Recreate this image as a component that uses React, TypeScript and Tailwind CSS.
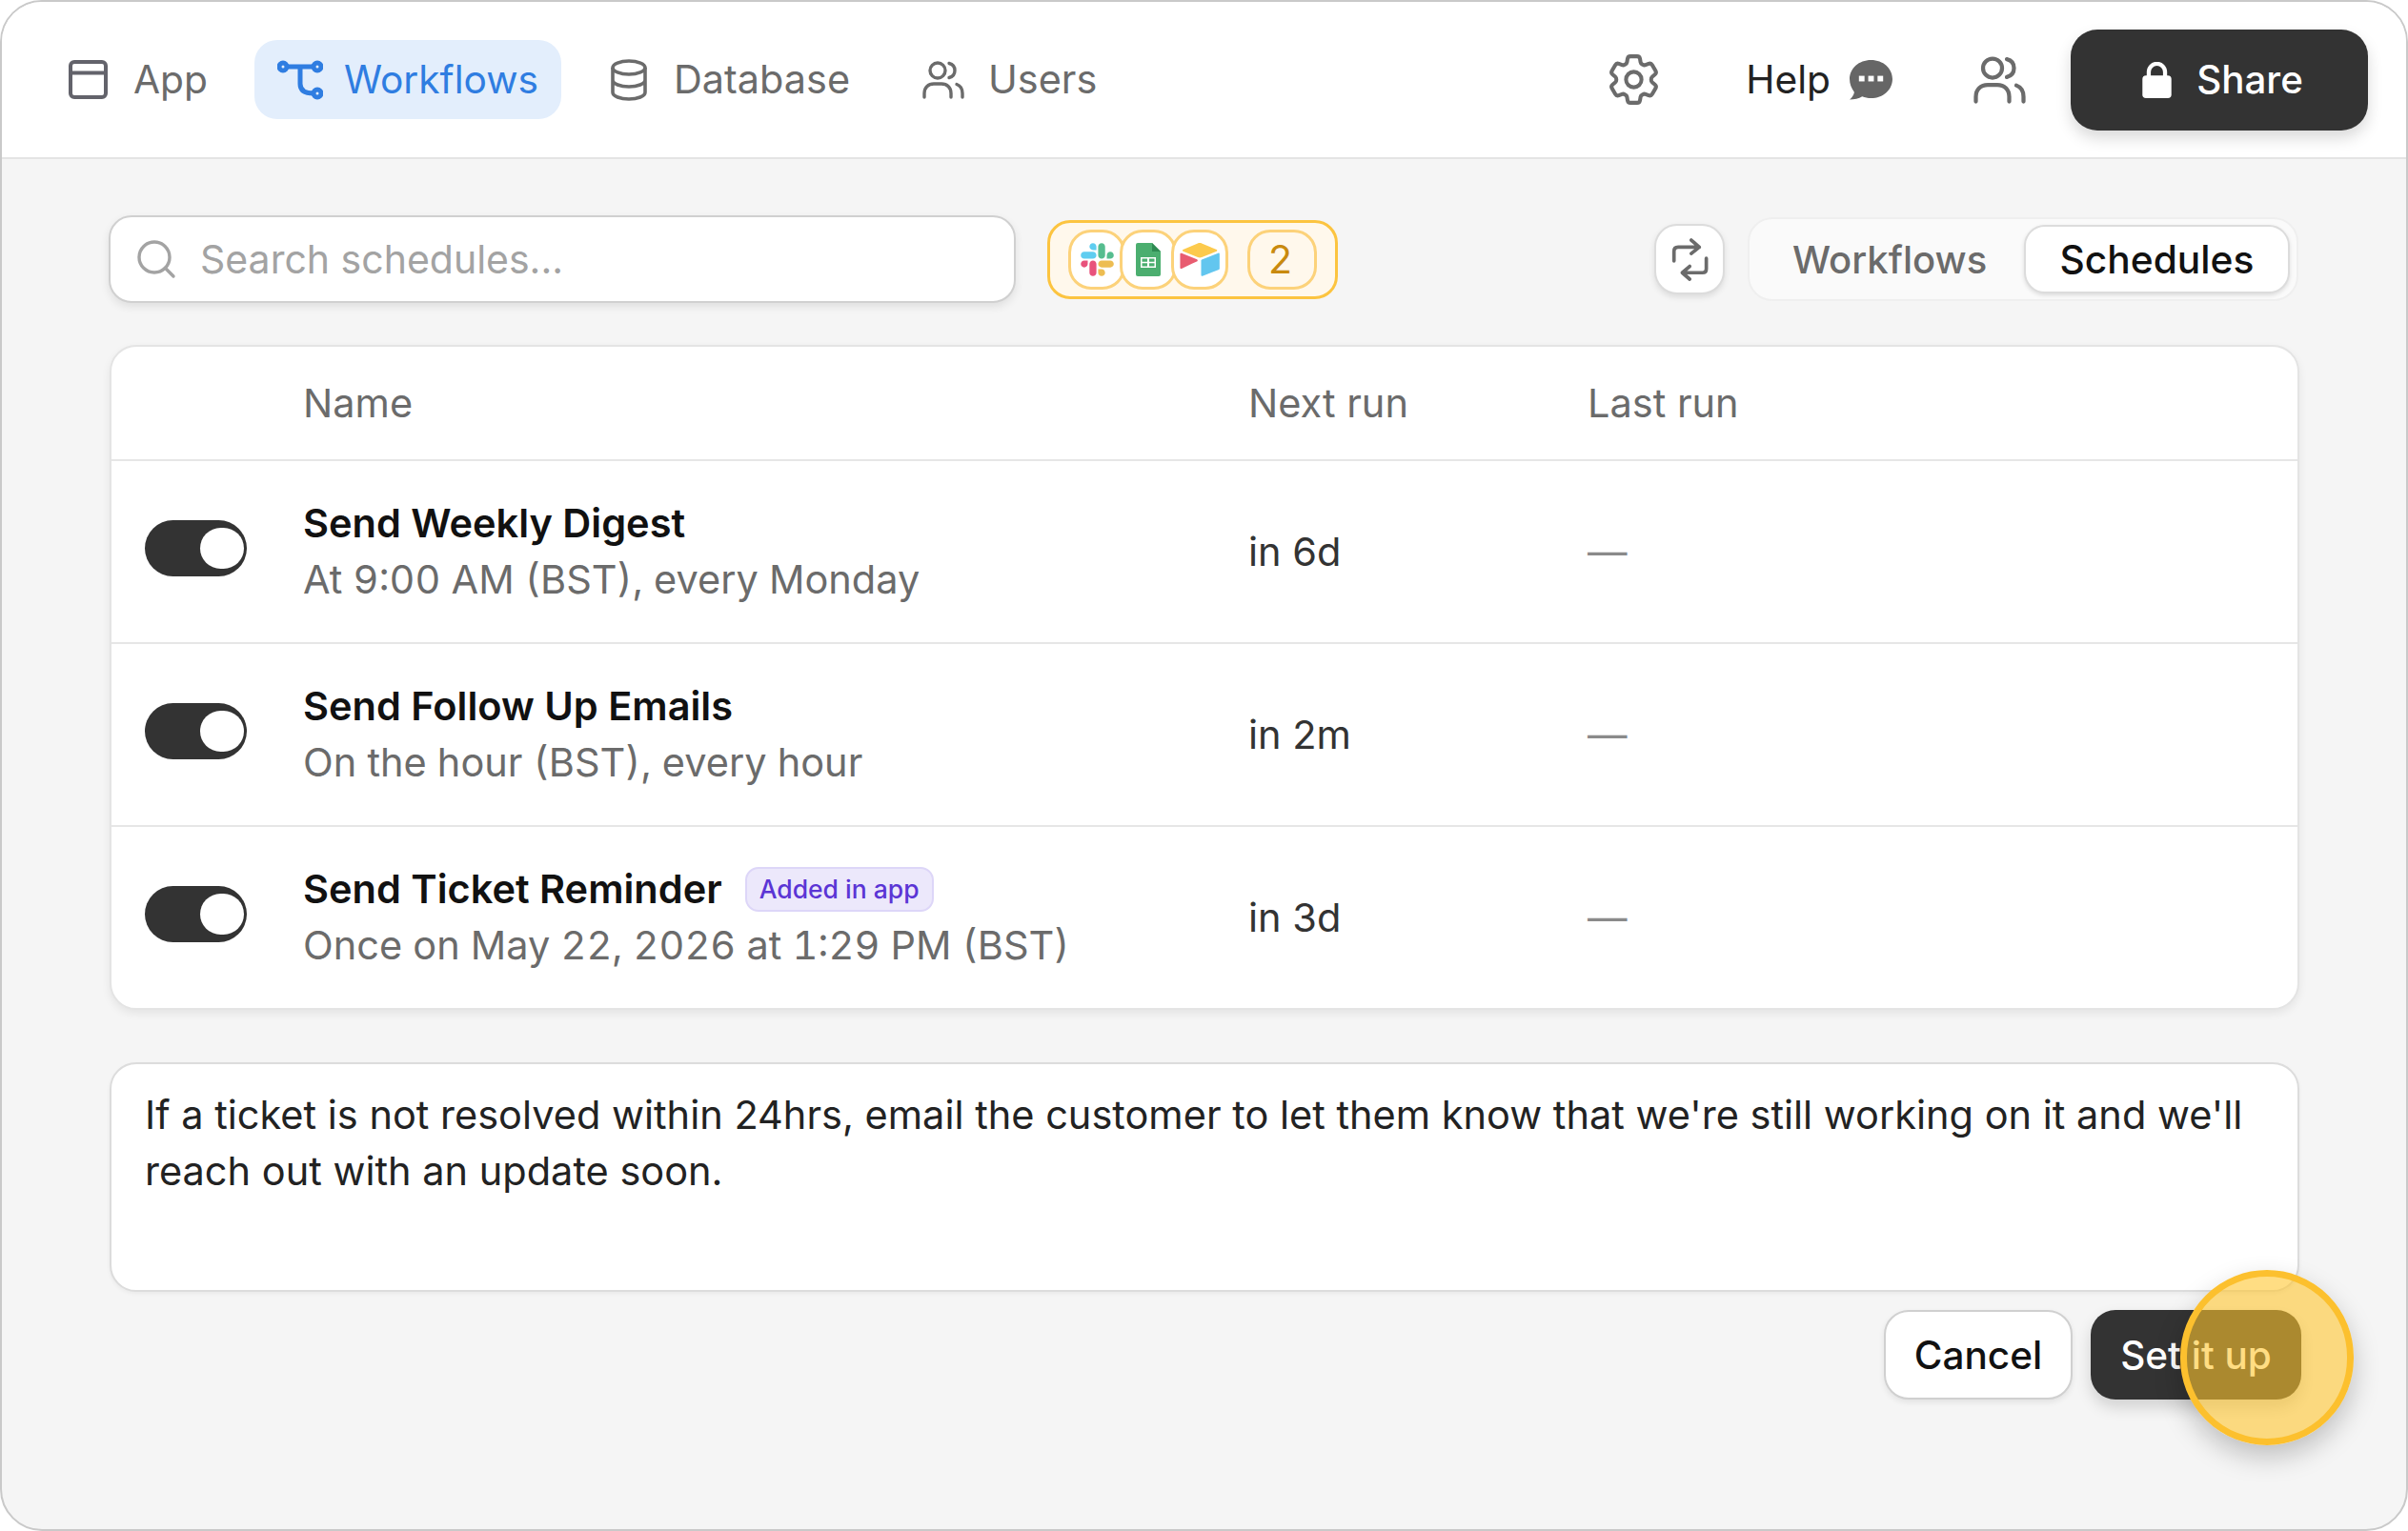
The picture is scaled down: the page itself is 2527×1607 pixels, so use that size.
import { Search } from "lucide-react";
import { HiOutlineCog6Tooth } from "react-icons/hi2";

type Schedule = {
  name: string;
  when: string;
  next: string;
  badge?: string;
};

const schedules: Schedule[] = [
  { name: "Send Weekly Digest", when: "At 9:00 AM (BST), every Monday", next: "in 6d" },
  { name: "Send Follow Up Emails", when: "On the hour (BST), every hour", next: "in 2m" },
  {
    name: "Send Ticket Reminder",
    when: "Once on May 22, 2026 at 1:29 PM (BST)",
    next: "in 3d",
    badge: "Added in app",
  },
];

const AppIcon = () => (
  <svg viewBox="0 0 41 41" className="h-[41px] w-[41px]" fill="none" stroke="currentColor" strokeWidth="4">
    <rect x="2" y="2" width="37" height="37" rx="4" />
    <path d="M2 13.5h37" />
  </svg>
);

const FlowIcon = () => (
  <svg viewBox="0 0 48 42" className="h-[42px] w-[48px]" fill="none" stroke="currentColor" strokeWidth="5">
    <circle cx="6" cy="7" r="4" />
    <circle cx="42" cy="7" r="4" />
    <circle cx="42" cy="35" r="4" />
    <path d="M10 7h28M24 7v18c0 6 4 10 14 10" />
  </svg>
);

const DbIcon = () => (
  <svg viewBox="0 0 40 44" className="h-[44px] w-[40px]" fill="none" stroke="currentColor" strokeWidth="3.6">
    <ellipse cx="20" cy="9" rx="17" ry="7" />
    <path d="M3 9v26c0 4 8 7 17 7s17-3 17-7V9M3 22c0 4 8 7 17 7s17-3 17-7" />
  </svg>
);

const UsersIcon = ({ className }: { className: string }) => (
  <svg viewBox="0 0 44 40" className={className} fill="none" stroke="currentColor" strokeWidth="3.4" strokeLinecap="round">
    <circle cx="16" cy="10" r="8" />
    <path d="M28 2.500c4 1 6 4 6 7.500s-2 6.500-6 7.500M2 38v-4c0-6 4-10 10-10h8c6 0 10 4 10 10v4M36 24.500c4 1.500 6 5 6 9.500v4" />
  </svg>
);

const ChatIcon = () => (
  <svg viewBox="0 0 48 44" className="h-[43px] w-[47px]">
    <path d="M24 1c13 0 23 9 23 20.500S37 42 24 42c-3.500 0-6.500-.6-9.500-1.800C11 42.500 6 43.500 1 43.500c2.500-2 4.500-5 5-8C3 31.500 1 26.800 1 21.500 1 10 11 1 24 1z" fill="#666666" />
    <rect x="11" y="18" width="6" height="6" fill="#fff" />
    <rect x="21" y="18" width="6" height="6" fill="#fff" />
    <rect x="31" y="18" width="6" height="6" fill="#fff" />
  </svg>
);

const LockIcon = () => (
  <svg viewBox="0 0 34 40" className="h-[38px] w-[33px]">
    <path d="M8 17v-6a9 9 0 0 1 18 0v6" fill="none" stroke="#fff" strokeWidth="4.500" />
    <rect x="1" y="15" width="32" height="25" rx="4" fill="#fff" />
  </svg>
);

const RepeatIcon = () => (
  <svg viewBox="98 84 116 134" className="h-[45px] w-[39px]" fill="none" stroke="#6b6b6b" strokeWidth="11" strokeLinecap="round" strokeLinejoin="round">
    <path d="M106 155v-30q0-13 13-13h66M160 90l25 22-25 20M207 147v33q0 12-12 12h-62M155 172l-23 20 23 20" />
  </svg>
);

const SlackLogo = () => (
  <svg viewBox="0 0 127 127" className="h-[35px] w-[35px]">
    <path d="M27.2 80c0 7.300-5.900 13.200-13.200 13.200C6.700 93.200.8 87.300.8 80c0-7.300 5.900-13.200 13.200-13.200h13.200V80zm6.600 0c0-7.300 5.900-13.200 13.200-13.200 7.300 0 13.200 5.900 13.200 13.200v33c0 7.300-5.900 13.200-13.200 13.200-7.300 0-13.200-5.900-13.200-13.200V80z" fill="#e8527c" />
    <path d="M47 27c-7.300 0-13.200-5.900-13.200-13.200C33.800 6.500 39.700.6 47 .6c7.300 0 13.200 5.900 13.200 13.200V27H47zm0 6.700c7.300 0 13.200 5.900 13.200 13.200 0 7.300-5.900 13.200-13.200 13.200H13.900C6.600 60.100.7 54.200.7 46.900c0-7.300 5.900-13.200 13.200-13.200H47z" fill="#5fcdf0" />
    <path d="M99.900 46.900c0-7.300 5.900-13.200 13.200-13.200 7.300 0 13.200 5.900 13.200 13.200 0 7.300-5.900 13.200-13.200 13.200H99.900V46.900zm-6.600 0c0 7.300-5.900 13.200-13.200 13.200-7.300 0-13.200-5.900-13.200-13.200V13.800C66.900 6.500 72.800.6 80.100.6c7.300 0 13.200 5.900 13.200 13.200v33.100z" fill="#56bd8f" />
    <path d="M80.100 99.800c7.300 0 13.200 5.900 13.200 13.200 0 7.300-5.900 13.200-13.200 13.200-7.300 0-13.200-5.900-13.200-13.200V99.800h13.200zm0-6.600c-7.300 0-13.200-5.900-13.200-13.200 0-7.300 5.900-13.200 13.200-13.200h33.100c7.300 0 13.200 5.900 13.200 13.200 0 7.300-5.900 13.200-13.200 13.200H80.100z" fill="#edbd52" />
  </svg>
);

const SheetsLogo = () => (
  <svg viewBox="0 0 26 35" className="h-[35px] w-[26px]">
    <path d="M2 0h15l9 9v24a2 2 0 0 1-2 2H2a2 2 0 0 1-2-2V2a2 2 0 0 1 2-2z" fill="#4bae6f" />
    <path d="M17 0l9 9h-9z" fill="#2f8a52" />
    <path d="M5 15h16v11H5z" fill="#fff" />
    <path d="M6.500 16.500h5.500v3.200H6.500zM14 16.500h5.500v3.200H14zM6.500 21.300h5.500v3.200H6.500zM14 21.300h5.500v3.200H14z" fill="#4bae6f" />
  </svg>
);

const AirtableLogo = () => (
  <svg viewBox="0 0 200 172" className="h-[36px] w-[42px]">
    <path d="M90 7.300 16.300 37.800c-4.100 1.700-4 7.500.1 9.200l74 29.300c6.500 2.600 13.700 2.600 20.200 0l74-29.300c4.100-1.600 4.200-7.500.1-9.200L110.100 7.300c-6.400-2.700-13.600-2.700-20.100 0" fill="#fcca4d" />
    <path d="M107.100 92.400v73.300c0 3.500 3.500 5.900 6.800 4.600l82.500-32c1.900-.8 3.100-2.600 3.100-4.600V60.400c0-3.500-3.500-5.900-6.800-4.600l-82.500 32c-1.900.7-3.100 2.600-3.100 4.600" fill="#62c6ef" />
    <path d="M88 96.200 63.500 108l-2.500 1.200-51.700 24.800c-3.300 1.600-7.500-.8-7.500-4.500V60.700c0-1.300.7-2.500 1.600-3.400.4-.4.8-.7 1.200-.9 1.200-.7 3-.9 4.400-.3L86.400 87c4 1.600 4.300 7.200 1.600 9.200" fill="#e85c70" />
  </svg>
);

const Toggle = () => (
  <div className="mb-[7px] flex h-[59px] w-[107px] items-center justify-end rounded-full bg-[#333333] pr-[3px]">
    <div className="h-[43px] w-[46px] rounded-full bg-white" />
  </div>
);

const Logo = ({ children }: { children: React.ReactNode }) => (
  <div className="-ml-[6px] flex h-[63px] w-[60px] items-center justify-center rounded-[24px] border-[3px] border-[#fcd27a] bg-white first:ml-0">
    {children}
  </div>
);

export default function App() {
  return (
    <div className="relative h-[1607px] w-[2527px] bg-white font-[family-name:Inter,sans-serif] text-[41.5px] leading-[59px]">
      <div className="flex h-full flex-col overflow-hidden rounded-[44px] border-2 border-[#c9c9c9] bg-[#f5f5f5]">
        {/* Top bar */}
        <div className="flex h-[165px] shrink-0 items-center justify-between border-b-2 border-[#e4e4e4] bg-white pl-[46px] pr-[40px] text-[41.4px]">
          <div className="flex items-center">
            <div className="flex h-[83px] items-center gap-[27px] px-[24px] text-[#6b6b6b]">
              <span className="text-[#63636b]"><AppIcon /></span>
              <span className="text-[40.7px]">App</span>
            </div>
            <div className="ml-[25px] flex h-[83px] items-center gap-[22px] rounded-[24px] bg-[#e3eefc] px-[24px] text-[40.7px] text-[#2f7de1]">
              <FlowIcon />
              <span>Workflows</span>
            </div>
            <div className="ml-[27px] flex h-[83px] items-center gap-[27px] px-[24px] text-[#6b6b6b]">
              <DbIcon />
              <span>Database</span>
            </div>
            <div className="ml-[28px] flex h-[83px] items-center gap-[25px] px-[24px] text-[#6b6b6b]">
              <UsersIcon className="h-[40px] w-[44px]" />
              <span>Users</span>
            </div>
          </div>
          <div className="flex items-center">
            <HiOutlineCog6Tooth className="h-[65px] w-[65px] text-[#6b6b6b]" />
            <div className="ml-[85px] flex items-center gap-[19px] text-[40.7px] text-[#222222]">
              <span>Help</span>
              <ChatIcon />
            </div>
            <span className="ml-[84px] text-[#6b6b6b]"><UsersIcon className="h-[50px] w-[55px]" /></span>
            <button className="ml-[47px] flex h-[106px] w-[312px] items-center justify-center gap-[25px] rounded-[28px] bg-[#333333] pl-[6px] text-[40.3px] font-medium text-white shadow-[0_8px_16px_rgba(0,0,0,0.15)]">
              <LockIcon />
              Share
            </button>
          </div>
        </div>

        <div className="flex flex-1 flex-col pl-[112px] pr-[112px] pt-[59px]">
          {/* Toolbar */}
          <div className="flex h-[92px] items-center">
            <div className="flex h-[92px] w-[952px] items-center gap-[22px] rounded-[24px] border-2 border-[#d0d0d0] bg-white pl-[24px] text-[41px] text-[#a3a3a3] shadow-[0_4px_10px_rgba(0,0,0,0.09)]">
              <Search className="h-[48px] w-[48px]" strokeWidth={1.7} />
              <span>Search schedules...</span>
            </div>
            <div className="ml-[33px] flex h-[83px] w-[305px] items-center rounded-[24px] border-[3px] border-[#fcc440] bg-[#fff8ec] pl-[19px]">
              <Logo><SlackLogo /></Logo>
              <Logo><SheetsLogo /></Logo>
              <Logo><AirtableLogo /></Logo>
              <div className="ml-[20px] flex h-[63px] w-[73px] items-center justify-center rounded-[24px] border-[3px] border-[#fcd27a] pr-[4px] text-[41px] text-[#c98a0e]">
                2
              </div>
            </div>
            <div className="ml-auto flex h-[74px] w-[74px] items-center justify-center rounded-[24px] border-2 border-[#dcdcdc] bg-white shadow-[0_3px_6px_rgba(0,0,0,0.1)]">
              <RepeatIcon />
            </div>
            <div className="ml-[24px] mr-[1px] flex h-[88px] w-[578px] items-center justify-between rounded-[26px] border-2 border-[#efefef] bg-[#fafafa] pl-[45px] pr-[7px] text-[40px]">
              <span className="font-medium text-[#6b6b6b]">Workflows</span>
              <div className="flex h-[72px] w-[279px] items-center justify-center rounded-[22px] border-2 border-[#dcdcdc] bg-white text-[40.7px] font-medium text-[#111111] shadow-[0_2px_4px_rgba(0,0,0,0.12)]">
                Schedules
              </div>
            </div>
          </div>

          {/* Table */}
          <div className="ml-[1px] mt-[44px] rounded-[28px] border-2 border-[#e4e4e4] bg-white shadow-[0_4px_10px_rgba(0,0,0,0.07)]">
            <div className="grid h-[120px] grid-cols-[201px_992px_356px_1fr] items-center border-b-2 border-[#e6e6e6] text-[#6b6b6b]">
              <div />
              <div>Name</div>
              <div>Next run</div>
              <div>Last run</div>
            </div>
            {schedules.map((item, index) => (
              <div
                key={item.name}
                className={`grid grid-cols-[201px_992px_356px_1fr] items-center ${
                  index < schedules.length - 1 ? "h-[192px] border-b-2 border-[#e6e6e6]" : "h-[190px]"
                }`}
              >
                <div className="pl-[35px]">
                  <Toggle />
                </div>
                <div>
                  <div className="flex items-center gap-[24px] font-semibold text-[#111111]">
                    {item.name}
                    {item.badge && (
                      <span className="rounded-[14px] border-2 border-[#ddd6f8] bg-[#ece8fb] px-[13px] py-[2px] text-[26.5px] font-medium leading-[39px] text-[#5b35d5]">
                        {item.badge}
                      </span>
                    )}
                  </div>
                  <div className="text-[#6b6b6b] tabular-nums">{item.when}</div>
                </div>
                <div className="text-[#333333]">{item.next}</div>
                <div className="text-[#8a8a8a]">—</div>
              </div>
            ))}
          </div>

          {/* Prompt */}
          <div className="ml-[1px] mt-[55px] h-[241px] rounded-[28px] border-2 border-[#dcdcdc] bg-white px-[35px] pt-[24px] text-[#222222] shadow-[0_2px_4px_rgba(0,0,0,0.05)]">
            If a ticket is not resolved within 24hrs, email the customer to let them know that we're still working on it and we'll reach out with an update soon.
          </div>

          <div className="-mr-[2px] mt-[19px] flex justify-end gap-[19px]">
            <button className="h-[94px] w-[198px] rounded-[26px] border-2 border-[#d0d0d0] bg-white text-[40.5px] font-medium text-[#111111] shadow-[0_3px_6px_rgba(0,0,0,0.08)]">
              Cancel
            </button>
            <button className="h-[94px] w-[221px] rounded-[26px] bg-[#333333] text-[40.5px] font-medium text-white shadow-[0_8px_16px_rgba(0,0,0,0.15)]">
              Set it up
            </button>
          </div>
        </div>
      </div>

      {/* Click highlight */}
      <div className="absolute left-[2288px] top-[1333px] h-[184px] w-[182px] rounded-full border-[7px] border-[#fcc02e] bg-[rgba(255,198,44,0.59)] shadow-[0_12px_28px_rgba(0,0,0,0.22)]" />
    </div>
  );
}
